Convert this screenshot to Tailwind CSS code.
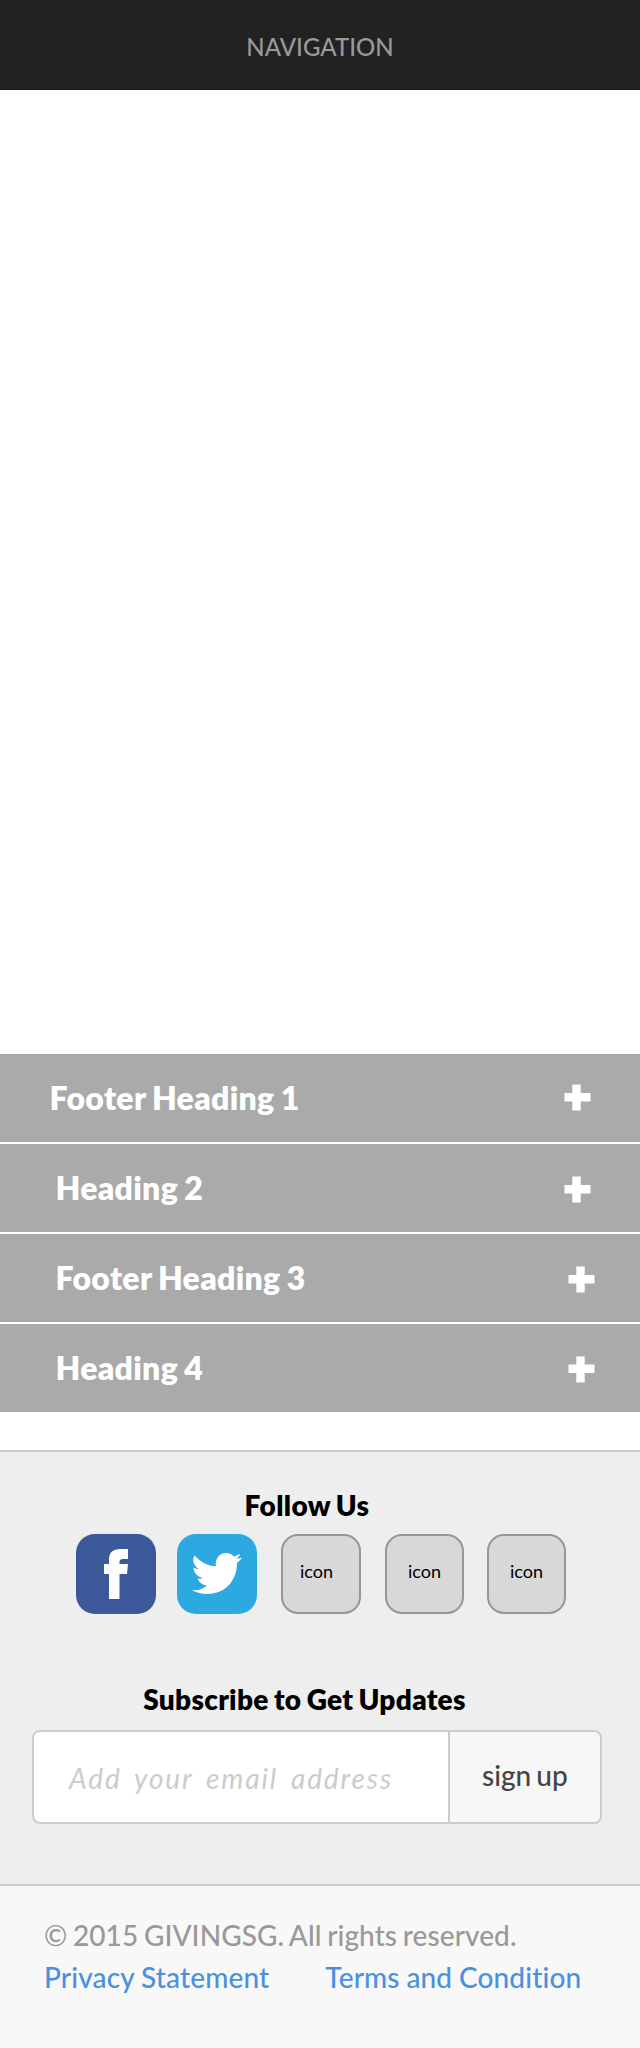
<!DOCTYPE html>
<html lang="en"><head><meta charset="utf-8"><title>GivingSG</title>
<script src="https://cdn.jsdelivr.net/npm/@tailwindcss/browser@4"></script></head>
<body class="w-[640px] bg-white font-['Lato',sans-serif] leading-[1.2] text-black [font-variant-ligatures:no-common-ligatures]">
<header class="flex h-[90px] items-center justify-center border-b border-[#1c161b] bg-[#222] pt-[5px] text-2xl leading-[1.2] font-medium text-[#999]">NAVIGATION</header>
<main class="h-[964px]"></main>
<section class="flex flex-col gap-[2px] text-[32px] font-extrabold tracking-[0.3px] [word-spacing:-1.5px] text-white">
<div class="flex h-[88px] items-start justify-between bg-[#aaa] pr-[49px] pl-[49.5px]"><h2 class="mt-[25px]">Footer Heading 1</h2><svg class="mt-[30px] h-[27px] w-[27px] fill-white"><path d="M8.3.5h8.4v8.6h9.8v8.4h-9.8v9H8.3v-9H.5V9.1h7.8z"/></svg></div>
<div class="flex h-[88px] items-start justify-between bg-[#aaa] pr-[49px] pl-[55.5px]"><h2 class="mt-[25px]">Heading 2</h2><svg class="mt-8 h-[27px] w-[27px] fill-white"><path d="M8.3.5h8.4v8.6h9.8v8.4h-9.8v9H8.3v-9H.5V9.1h7.8z"/></svg></div>
<div class="flex h-[88px] items-start justify-between bg-[#aaa] pr-[45px] pl-[55.5px]"><h2 class="mt-[25px]">Footer Heading 3</h2><svg class="mt-8 h-[27px] w-[27px] fill-white"><path d="M8.3.5h8.4v8.6h9.8v8.4h-9.8v9H8.3v-9H.5V9.1h7.8z"/></svg></div>
<div class="flex h-[88px] items-start justify-between bg-[#aaa] pr-[45px] pl-[55.5px]"><h2 class="mt-[25px]">Heading 4</h2><svg class="mt-8 h-[27px] w-[27px] fill-white"><path d="M8.3.5h8.4v8h9.8v8.4h-9.8v9.6H8.3v-9.6H.5V8.5h7.8z"/></svg></div>
</section>
<section class="mt-[38px] flex h-[434px] flex-col border-t-2 border-[#ccc] bg-[#eee]">
<h3 class="mt-[37px] h-[33px] pr-[26px] text-center text-[28px] font-extrabold tracking-[0.35px] [word-spacing:-1.5px]">Follow Us</h3>
<div class="mt-3 flex h-20 pl-[76px] text-[18px]">
<svg class="h-20 w-20" viewBox="0 0 80 80"><rect width="80" height="80" rx="19" fill="#3b5998"/><path fill="#fff" d="M33 65V40h-5V30h5v-4.500C33 18.500 37 15 44 15h8v10h-5c-2.500 0-3.500 1-3.500 3v2H52l-1 10h-7.500v25z"/></svg>
<svg class="ml-[21px] h-20 w-20" viewBox="0 0 80 80"><rect width="80" height="80" rx="19" fill="#2ca9e1"/><path fill="#fff" d="M14.500 56C21 57 26 55 30 51.500C25 51 22 48 20.500 44.500C22 45 24 45 25.500 44C20 42.500 16.500 38.500 16.500 33.500C18 34.500 20 35 21.500 35C16.500 31 15 26 17.500 21.500C23.500 28 31 32 39 32.300C37.500 25 42.500 19 49 19C52.500 19 55 20.500 57 22.500L63 20C62.500 22 61 24 59.500 25L65 23.800C63.500 26 62 27.500 60 29C60 46 48.500 60 30.500 60C25 60 19.500 58.500 14.500 56z"/></svg>
<div class="ml-6 h-20 w-[80px] rounded-[17px] border-2 border-[#979797] bg-[#d8d8d8] pt-[25px] pl-[17px]">icon</div>
<div class="ml-6 h-20 w-[79px] rounded-[17px] border-2 border-[#979797] bg-[#d8d8d8] pt-[25px] pl-[21px]">icon</div>
<div class="ml-[23px] h-20 w-[79px] rounded-[17px] border-2 border-[#979797] bg-[#d8d8d8] pt-[25px] pl-[21px]">icon</div>
</div>
<h3 class="mt-[69px] h-[33px] pr-[31px] text-center text-[28px] font-extrabold tracking-[0.3px] [word-spacing:-1.5px]">Subscribe to Get Updates</h3>
<div class="mt-[14px] ml-8 flex h-[94px] w-[570px] overflow-hidden rounded-lg border-2 border-[#ccc] bg-white text-[28px]">
<div class="w-[414px] pt-[30px] pl-[35px] tracking-[1.9px] text-[#ccc] italic [word-spacing:4.5px]">Add your email address</div>
<div class="flex-1 border-l-2 border-[#ccc] bg-[#f7f7f7] pt-[27px] pl-8 font-medium [word-spacing:-2px] text-[#444]">sign up</div>
</div>
</section>
<footer class="h-[164px] border-t-2 border-[#ccc] bg-[#f8f8f8] pt-[33px] pl-[44px] text-[28px] font-medium text-[#999]">
<p class="h-[42px] tracking-[0.08px] [word-spacing:-1.5px]">© 2015 GIVINGSG. All rights reserved.</p>
<div class="flex gap-[56px] tracking-[0.15px] [word-spacing:-0.5px] text-[#4a90e2]"><a>Privacy Statement</a><a>Terms and Condition</a></div>
</footer>
</body></html>
